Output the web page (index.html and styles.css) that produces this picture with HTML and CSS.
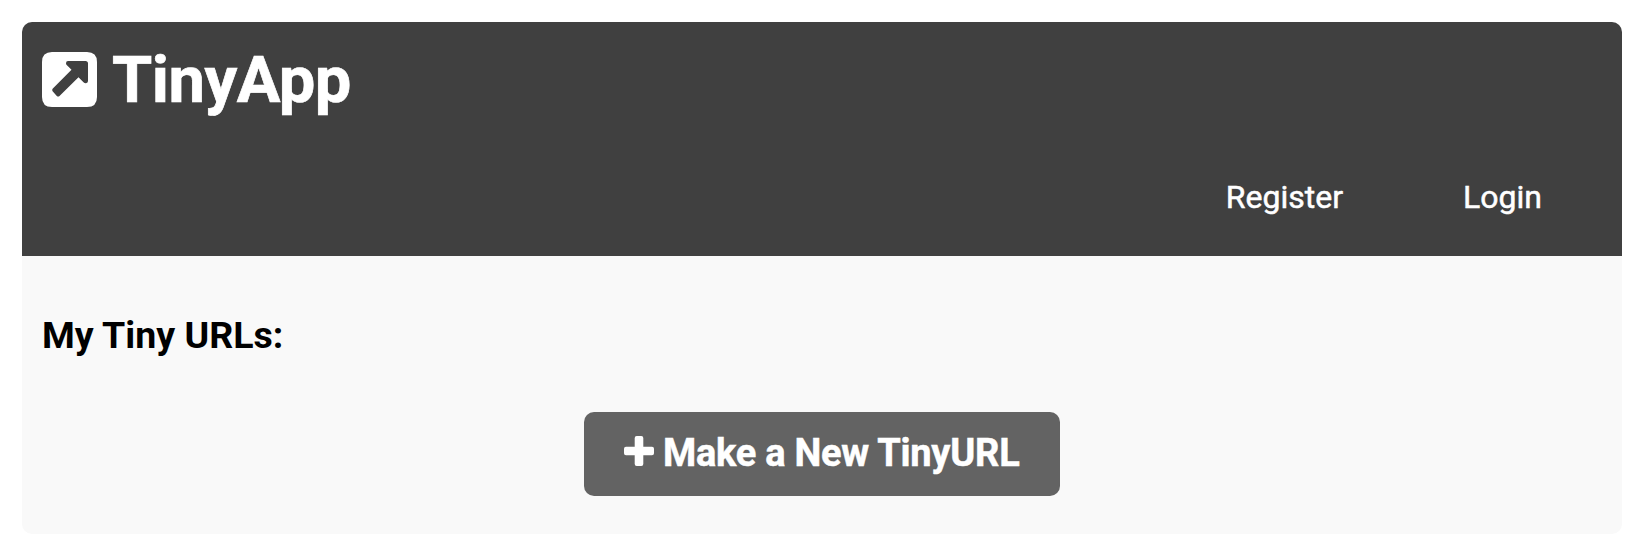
FILE: index.html
```html
<!DOCTYPE html>
<html lang="en">
<head>
<meta charset="utf-8">
<title>TinyApp</title>
<link rel="stylesheet" href="styles.css">
</head>
<body>
<div class="panel">
  <header class="header">
    <h1 class="brand">
      <svg class="brand-icon" viewBox="0 0 55 55" aria-hidden="true"><path fill="#fff" fill-rule="evenodd" d="M10 0H45Q55 0 55 10V45Q55 55 45 55H10Q0 55 0 45V10Q0 0 10 0ZM26 9Q24 9 24 11.3Q24 12.4 24.7 13.1L29.5 17.8L10.6 36.7Q9.7 38 10.6 39.3L14.8 43.9Q16.2 45 17.5 43.9L36.5 25.3L41.5 30.3Q42.6 31.3 44 31.2Q46 31 46 29V11.5Q46 9 43.5 9Z"/></svg>
      <span class="brand-name">TinyApp</span>
    </h1>
    <nav class="nav">
      <a class="nav-link">Register</a>
      <a class="nav-link">Login</a>
    </nav>
  </header>
  <main class="content">
    <h2 class="title">My Tiny URLs:</h2>
    <button class="create" type="button">
      <svg class="plus" viewBox="0 0 30 30" aria-hidden="true"><path fill="#fff" d="M12.7 0H17.3Q19.3 0 19.3 2V10.7H28Q30 10.7 30 12.7V17.3Q30 19.3 28 19.3H19.3V28Q19.3 30 17.3 30H12.7Q10.7 30 10.7 28V19.3H2Q0 19.3 0 17.3V12.7Q0 10.7 2 10.7H10.7V2Q10.7 0 12.7 0Z"/></svg>
      <span class="create-label">Make a New TinyURL</span>
    </button>
  </main>
</div>
</body>
</html>
```

FILE: styles.css
```css
body {
  margin: 0;
  padding: 22px 19px 16px 22px;
  background: #fff;
  font-family: Roboto, sans-serif;
}
.panel {
  height: 512px;
  border-radius: 10px;
  overflow: hidden;
  background: #f9f9f9;
}
.header {
  box-sizing: border-box;
  height: 234px;
  padding: 20px;
  background: #404040;
  color: #fff;
}
.brand {
  display: flex;
  align-items: center;
  gap: 15px;
  height: 75px;
  margin: 0;
  font-size: 65px;
  line-height: 75px;
}
.brand-icon {
  width: 55px;
  height: 55px;
}
.brand-name {
  margin-top: 1px;
  letter-spacing: -0.5px;
  -webkit-text-stroke: 0.7px #fff;
}
.nav {
  display: flex;
  justify-content: flex-end;
  gap: 120px;
  padding: 61px 60px 0 0;
  font-size: 32px;
  line-height: 38px;
  -webkit-text-stroke: 0.5px #fff;
}
.content {
  padding: 58px 20px 0;
}
.title {
  margin: 0 0 56px;
  font-size: 37.5px;
  line-height: 42px;
}
.create {
  display: flex;
  align-items: center;
  gap: 9px;
  width: 476px;
  height: 84px;
  margin: 0 auto;
  padding: 0 40px;
  border: 0;
  border-radius: 10px;
  background: #636363;
  color: #fff;
  font: bold 38px/80px Roboto, sans-serif;
}
.plus {
  flex: none;
  width: 30px;
  height: 30px;
  margin-bottom: 6px;
}
.create-label {
  margin-bottom: 2px;
  letter-spacing: -0.25px;
  white-space: nowrap;
  -webkit-text-stroke: 0.5px #fff;
}
```
